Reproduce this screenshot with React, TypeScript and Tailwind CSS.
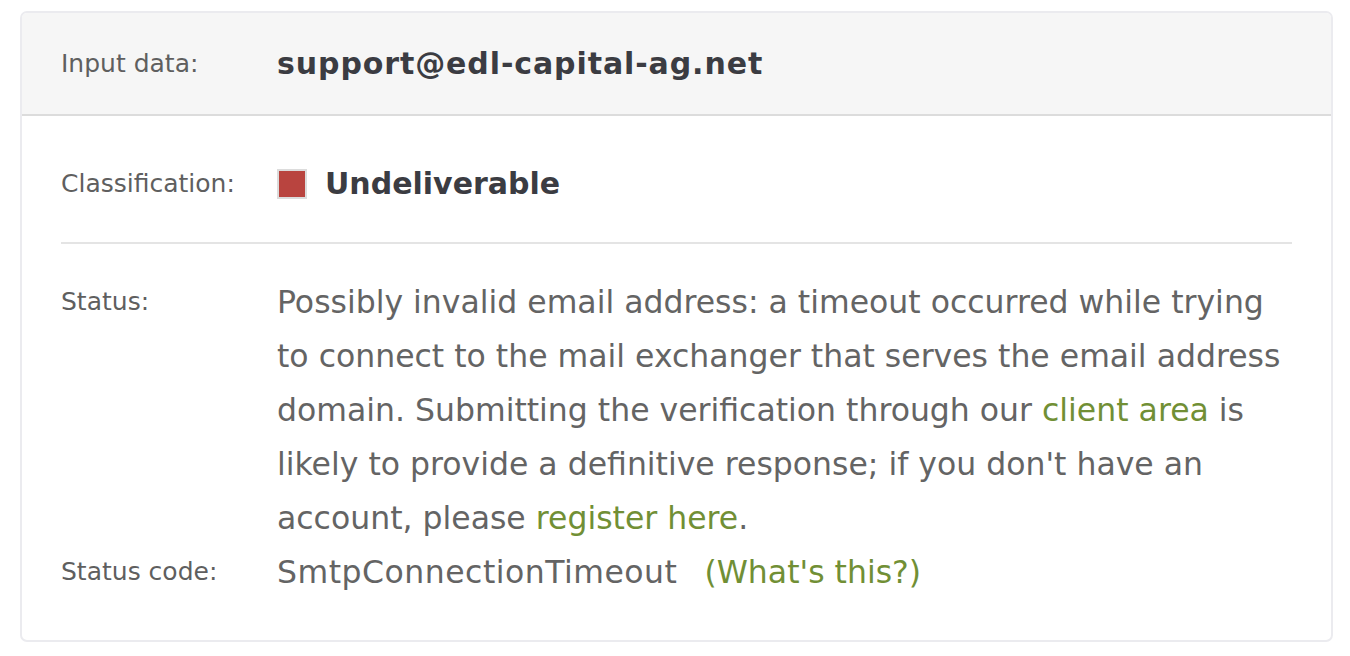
const labelCls = "text-[25px] text-[#5f5f5f]"
const linkCls = "text-[#718f35]"

const App = () => {
  return (
    <div className="min-h-screen bg-white pt-[11px] pl-[20px]" style={{ fontFamily: '"DejaVu Sans", "Liberation Sans", sans-serif' }}>
      <div className="w-[1313px] overflow-hidden rounded-[7px] border-2 border-[#ebebef] bg-white">
        {/* header */}
        <div className="grid h-[103px] grid-cols-[216px_1fr] items-center border-b-2 border-[#dcdcdc] bg-[#f6f6f6] px-[39px]">
          <span className={labelCls}>Input data:</span>
          <span className="text-[30px] font-bold tracking-[0.9px] text-[#3b3c42]">support@edl-capital-ag.net</span>
        </div>

        {/* body */}
        <div className="px-[39px] pt-[45px] pb-[41px]">
          <div className="grid h-[40px] grid-cols-[216px_1fr] items-center">
            <span className={labelCls}>Classification:</span>
            <div className="flex items-center gap-[18px]">
              <span className="h-[30px] w-[30px] border-2 border-[#dcdcdc] bg-[#b9443f]" />
              <span className="text-[30px] font-bold text-[#3b3c42]">Undeliverable</span>
            </div>
          </div>

          <div className="mt-[41px] mb-[31px] h-[2px] bg-[#e4e4e4]" />

          <div className="grid grid-cols-[216px_1fr] leading-[54px]">
            <span className={labelCls}>Status:</span>
            <p className="text-[31.5px] text-[#646464]">
              Possibly invalid email address: a timeout occurred while trying to connect to the mail exchanger that
              serves the email address domain. Submitting the verification through our{" "}
              <a className={linkCls}>client area</a> is likely to provide a definitive response; if you don't have
              an account, please <a className={linkCls}>register here</a>.
            </p>
            <span className={labelCls}>Status code:</span>
            <div className="text-[31.5px] text-[#646464]">
              <span className="tracking-[0.5px]">SmtpConnectionTimeout</span>
              <a className={`ml-[27px] ${linkCls}`}>(What's this?)</a>
            </div>
          </div>
        </div>
      </div>
    </div>
  )
}

export default App
